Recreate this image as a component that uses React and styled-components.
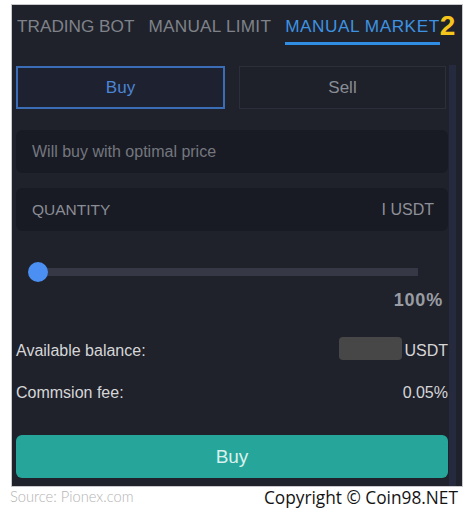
import React from 'react';
import styled, { createGlobalStyle } from 'styled-components';

const GlobalStyle = createGlobalStyle`
  body {
    margin: 0;
    background: #ffffff;
    font-family: "Liberation Sans", Arial, sans-serif;
  }
`

const Page = styled.div`
  width: 475px;
  height: 509px;
  overflow: hidden;
`

const Panel = styled.section`
  display: flex;
  flex-direction: column;
  width: 450px;
  height: 481px;
  margin: 4px 0 0 11px;
  background: #1f222b;
  border: 1px solid #c9c9cc;
`

const Tabs = styled.nav`
  display: flex;
  align-items: flex-start;
  height: 60px;
  padding-left: 5px;
  gap: 14px;
`

const TabGroup = styled.div`
  display: flex;
  align-items: flex-start;
`

const Tab = styled.div`
  padding: 11px 0 6px;
  font-size: 17.2px;
  line-height: 20px;
  letter-spacing: ${props => props.spacing || 0}px;
  color: ${props => props.active ? "#3d93e2" : "#7f8289"};
  border-bottom: 3px solid ${props => props.active ? "#2f8de4" : "transparent"};
  white-space: nowrap;
`

const Badge = styled.span`
  margin-top: 5px;
  margin-left: 0;
  font-size: 28px;
  line-height: 32px;
  font-weight: bold;
  color: #f6c51c;
`

const Body = styled.div`
  display: flex;
  flex: 1;
  padding-right: 6px;
`

const Content = styled.div`
  display: flex;
  flex-direction: column;
  flex: 1;
  margin-left: 4px;
  padding-bottom: 8px;
`

const Scrollbar = styled.div`
  width: 7px;
  margin-left: 1px;
  background: #262a3f;
`

const SideRow = styled.div`
  display: flex;
  gap: 14px;
  margin-top: 1px;
  padding-right: 2px;
`

const SideButton = styled.button`
  flex: 1;
  height: 43px;
  background: ${props => props.active ? "#1e2130" : "#1e2129"};
  border: ${props => props.active ? "2px solid #3a6db5" : "1px solid #2c2f39"};
  color: ${props => props.active ? "#4b86d4" : "#8a8d95"};
  font-family: "Liberation Sans", Arial, sans-serif;
  font-size: 17px;
  cursor: pointer;
`

const Field = styled.div`
  display: flex;
  align-items: center;
  justify-content: space-between;
  height: 43px;
  margin-top: ${props => props.gap}px;
  padding: 0 14px 0 16px;
  background: #191b24;
  border-radius: 6px;
  font-size: ${props => props.muted ? 16 : 15.5}px;
  color: ${props => props.muted ? "#74777f" : "#8a8d95"};
`

const Unit = styled.span`
  font-size: 16px;
  color: #8d9099;
`

const Slider = styled.div`
  display: flex;
  align-items: center;
  height: 20px;
  margin: 31px 0 0 12px;
`

const Thumb = styled.div`
  width: 20px;
  height: 20px;
  border-radius: 50%;
  background: #4a8ff1;
  flex-shrink: 0;
  z-index: 1;
`

const Track = styled.div`
  width: 380px;
  height: 8px;
  margin-left: -10px;
  background: #363945;
`

const Percent = styled.div`
  margin-top: 7px;
  padding-right: 5px;
  text-align: right;
  font-size: 18px;
  line-height: 22px;
  font-weight: bold;
  color: #9a9ca3;
  letter-spacing: 0.8px;
`

const InfoRow = styled.div`
  display: flex;
  align-items: center;
  justify-content: space-between;
  height: ${props => props.tall ? 23 : 20}px;
  margin-top: ${props => props.gap}px;
  font-size: 16px;
  line-height: 20px;
  color: #d6d6d8;
`

const Label = styled.span`
  padding-top: ${props => props.shift || 0}px;
`

const Balance = styled.div`
  display: flex;
  align-items: center;
  gap: 2px;
`

const Hidden = styled.div`
  width: 63px;
  height: 23px;
  border-radius: 4px;
  background: #474747;
`

const BuyButton = styled.button`
  height: 43px;
  margin-top: 32px;
  border: none;
  border-radius: 6px;
  background: #26a69a;
  color: #d9f1ee;
  font-family: "Liberation Sans", Arial, sans-serif;
  font-size: 19px;
  cursor: pointer;
`

const Footer = styled.footer`
  display: flex;
  justify-content: space-between;
  align-items: flex-start;
  padding: 1px 17px 0 10px;
`

const Source = styled.span`
  font-family: Lato, sans-serif;
  font-weight: 300;
  font-size: 14.7px;
  line-height: 17px;
  color: #b4b4b4;
`

const Copyright = styled.span`
  font-family: "Open Sans", sans-serif;
  font-size: 17.3px;
  line-height: 20px;
  color: #141414;
`

function App() {
  return (
    <Page>
      <GlobalStyle />
      <Panel>
        <Tabs>
          <Tab>TRADING BOT</Tab>
          <Tab spacing={0.25}>MANUAL LIMIT</Tab>
          <TabGroup>
            <Tab active spacing={0.55}>MANUAL MARKET</Tab>
            <Badge>2</Badge>
          </TabGroup>
        </Tabs>
        <Body>
          <Content>
            <SideRow>
              <SideButton active>Buy</SideButton>
              <SideButton>Sell</SideButton>
            </SideRow>
            <Field gap={21} muted>Will buy with optimal price</Field>
            <Field gap={15}>
              <span>QUANTITY</span>
              <Unit>I USDT</Unit>
            </Field>
            <Slider>
              <Thumb />
              <Track />
            </Slider>
            <Percent>100%</Percent>
            <InfoRow gap={26} tall>
              <Label shift={4}>Available balance:</Label>
              <Balance>
                <Hidden />
                <Label shift={4}>USDT</Label>
              </Balance>
            </InfoRow>
            <InfoRow gap={23}>
              <Label>Commsion fee:</Label>
              <Label>0.05%</Label>
            </InfoRow>
            <BuyButton>Buy</BuyButton>
          </Content>
          <Scrollbar />
        </Body>
      </Panel>
      <Footer>
        <Source>Source: Pionex.com</Source>
        <Copyright>Copyright © Coin98.NET</Copyright>
      </Footer>
    </Page>
  );
}

export default App
